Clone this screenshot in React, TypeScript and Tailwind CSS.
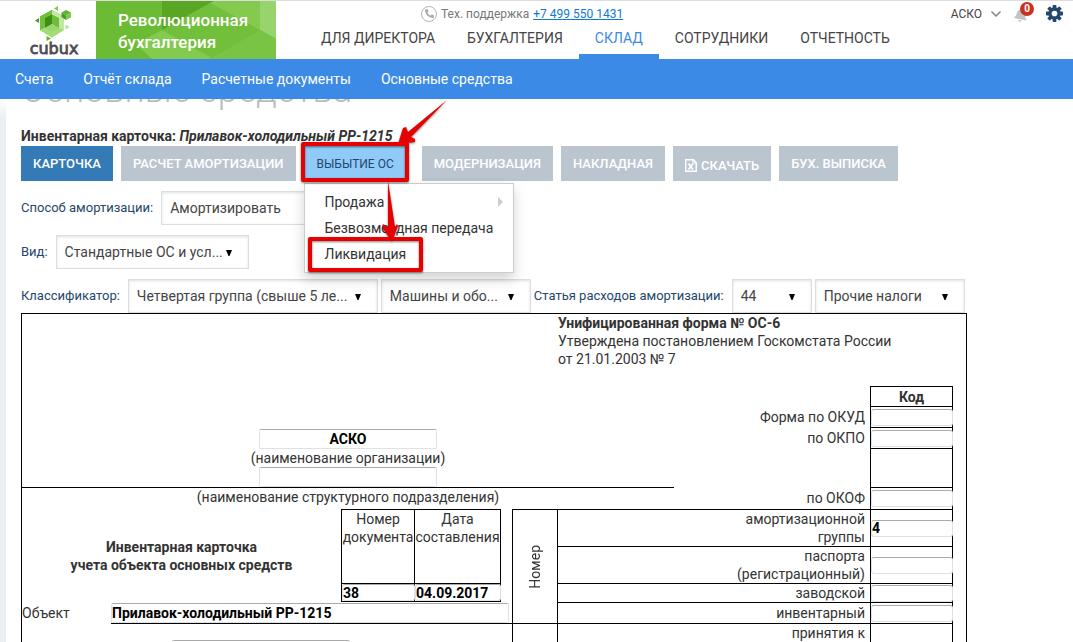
import React from "react";
import { ChevronDown } from "lucide-react";
import { FaBell, FaPhoneAlt } from "react-icons/fa";

function Logo() {
  return (
    <a href="#home" aria-label="cubux" className="flex w-24 shrink-0 flex-col items-center pl-3 pt-1">
      <svg width="40" height="36" viewBox="0 0 40 36" aria-hidden="true">
        <path d="M18 5 30 11.500 18 18 6 11.500Z" fill="#5cb531" />
        <path d="M18 5 6 11.500V25l12 7.500V18Z" fill="#6fbf3b" />
        <path d="M18 5 30 11.500V25L18 32.500V18Z" fill="#c3e8a5" />
        <path d="M6 25 18 32.500 30 25 18 19Z" fill="#a3dc78" />
        <path d="M11 13 18 9.500V19l-7 4Z" fill="#3f8f14" />
        <path d="M18 9.500 25 13v10l-7-4Z" fill="#6fbd3a" />
        <path d="M11 23 18 19l7 4-7 4Z" fill="#9bd76f" />
        <path d="M27.500 7.500 32 5l5 2.500-5 3Z" fill="#5cb531" />
        <path d="M32 10.500 37 7.500v5L32 15Z" fill="#7cc850" />
        <path d="M27.500 7.500 32 10.500V15L27.500 12Z" fill="#4a9c1e" />
        <path d="M20 3.500 24 1v5Z" fill="#7cc850" />
        <path d="M1 15.500 5 13v5Z" fill="#4a9c1e" />
        <path d="M31.500 19.500 36 22l-4.500 2.500Z" fill="#b9e59a" />
        <path d="M12.500 31 17 33.500 12.500 36Z" fill="#5cb531" />
      </svg>
      <span className="font-['DejaVu_Sans',sans-serif] text-base leading-4 text-[#4c4d51] [-webkit-text-stroke:0.8px_#4c4d51]">
        cubux
      </span>
    </a>
  );
}

function Banner() {
  return (
    <div className="relative w-[180px] shrink-0 overflow-hidden bg-[#6cbb34]">
      <svg className="absolute inset-0 size-full" viewBox="0 0 180 58" preserveAspectRatio="none" aria-hidden="true">
        <path d="M66 0h62L114 4 66 30Z" fill="#58a624" />
        <path d="M114 2 164 29 116 57 66 29Z" fill="#72bf3c" />
        <path d="M118 0h46v29L114 2Z" fill="#84ca4f" />
        <path d="M66 29 116 57l-2 1H56L40 43Z" fill="#84ca4f" />
        <path d="M164 0h16v38l-16-9Z" fill="#98d46e" />
        <path d="M164 29 180 38v20h-64v-1Z" fill="#7ac445" />
      </svg>
      <p className="relative pl-[22px] pt-2 text-[17px] leading-[22px] font-medium text-white">
        Революционная
        <br />
        бухгалтерия
      </p>
    </div>
  );
}

function Gear() {
  return (
    <svg width="17" height="17" viewBox="-9 -9 18 18" aria-hidden="true" fill="currentColor">
      {[0, 45, 90, 135].map((a) => (
        <rect key={a} x="-2" y="-9" width="4" height="18" rx="0.8" transform={`rotate(${a})`} />
      ))}
      <circle r="6.500" />
      <circle r="3" fill="#fff" />
    </svg>
  );
}

function SpreadsheetIcon() {
  return (
    <svg width="12" height="13" viewBox="0 0 12 13" aria-hidden="true" className="mr-1">
      <path d="M.75.75h7.500l3 3v8.500H.75Z" fill="none" stroke="#fff" strokeWidth="1.500" />
      <path d="M8 .5V4h3.500" fill="none" stroke="#fff" />
      <path d="M3.500 4.500 8 10.500M8 4.500 3.500 10.500" stroke="#fff" strokeWidth="1.800" />
    </svg>
  );
}

const sections = ["Для директора", "Бухгалтерия", "Склад", "Сотрудники", "Отчетность"];
const subsections = ["Счета", "Отчёт склада", "Расчетные документы", "Основные средства"];

function Header() {
  return (
    <header className="shrink-0">
      <div className="flex h-[59px] border-t border-[#ddd] bg-white">
        <Logo />
        <Banner />
        <div className="flex min-w-0 flex-1 flex-col justify-between">
          <div className="flex items-center pt-1 pr-2.5">
            <div className="flex flex-1 items-center pl-[145px] text-xs text-[#777]">
              <span className="mr-1 flex size-4 items-center justify-center rounded-full border border-[#b5b5b5] text-[#aaa]">
                <FaPhoneAlt size={9} />
              </span>
              Тех. поддержка
              <a href="tel:+74995501431" className="ml-1 text-[#0b7ad1] underline">
                +7 499 550 1431
              </a>
            </div>
            <button type="button" className="mr-2.5 flex items-center gap-1.5 text-xs text-[#444]">
              АСКО
              <ChevronDown size={16} strokeWidth={2.5} className="text-[#888]" />
            </button>
            <button type="button" aria-label="Уведомления" className="relative mr-3 flex h-4 w-5 items-end text-[#c4c4c4]">
              <FaBell size={14} className="rotate-12" />
              <span className="absolute -top-1 left-1.5 flex size-3.5 items-center justify-center rounded-full bg-[#c8321f] text-[10px] font-bold text-white">
                0
              </span>
            </button>
            <button type="button" aria-label="Настройки" className="text-[#24476b]">
              <Gear />
            </button>
          </div>
          <nav className="flex pl-[29px]">
            {sections.map((s) => (
              <a
                key={s}
                href="#section"
                className={
                  s === "Склад"
                    ? "border-b-5 border-[#3b8ae6] px-4 pb-1.5 text-sm text-[#3b8ae6] uppercase"
                    : "border-b-5 border-transparent px-4 pb-1.5 text-sm text-[#444] uppercase"
                }
              >
                {s}
              </a>
            ))}
          </nav>
        </div>
      </div>
      <nav className="flex h-10 items-center gap-[30px] bg-[#3b8ae6] pl-[15px] text-sm text-white">
        {subsections.map((s) => (
          <a key={s} href="#subsection">
            {s}
          </a>
        ))}
      </nav>
    </header>
  );
}

const RED = "#e60000";

function Pointers() {
  return (
    <svg
      className="pointer-events-none absolute -top-[47px] -left-[3px] z-20 drop-shadow-[0_1px_1px_rgba(0,0,0,0.5)]"
      width="150"
      height="180"
      viewBox="0 0 150 180"
      aria-hidden="true"
    >
      <rect x="2" y="45" width="104" height="36" fill="none" stroke={RED} strokeWidth="4" strokeLinejoin="round" />
      <rect x="9" y="140" width="111" height="31" fill="none" stroke={RED} strokeWidth="4" strokeLinejoin="round" />
      <path d="M146 1 107 33 105 28 102 29 97 45 114 43 114 40 110 38Z" fill={RED} />
      <path d="M87 82 87 129 82 125 81 128 91 143 97 127 96 125 94 128Z" fill={RED} />
    </svg>
  );
}

function DisposalMenu() {
  return (
    <div className="relative mr-2 pl-px">
      <button type="button" className="h-[35px] bg-[#90caf9] px-3 text-xs text-[#24476b]">
        ВЫБЫТИЕ ОС
      </button>
      <ul className="absolute top-[37px] left-0 z-10 w-[210px] border border-[#ccc] bg-white py-[5px] pl-5 text-sm leading-[26px] text-[#333] shadow-[0_6px_12px_rgba(0,0,0,0.18)]">
        <li className="flex items-center justify-between pr-2.5">
          <a href="#sale">Продажа</a>
          <span className="border-y-5 border-l-5 border-y-transparent border-l-[#ccc]" />
        </li>
        <li>
          <a href="#transfer">Безвозмездная передача</a>
        </li>
        <li>
          <a href="#liquidation">Ликвидация</a>
        </li>
      </ul>
      <Pointers />
    </div>
  );
}

function GrayButton({ children }: { children: React.ReactNode }) {
  return (
    <button type="button" className="flex h-[35px] items-center bg-[#bbc5d0] px-3 text-[13px] font-medium text-white">
      {children}
    </button>
  );
}

function Picker({ id, value, width, label }: { id: string; value: string; width: string; label?: string }) {
  return (
    <span className={"relative block h-[34px] " + width}>
      <select
        id={id}
        aria-label={label}
        className="size-full appearance-none border border-[#ddd] bg-white pr-6 pl-2 text-sm text-[#444] shadow-[inset_0_1px_3px_rgba(0,0,0,0.12)]"
      >
        <option>{value}</option>
      </select>
      <svg className="pointer-events-none absolute top-[15px] right-[17px]" width="6" height="6" viewBox="0 0 6 6" aria-hidden="true">
        <path d="M0 0h6L3.500 6h-1Z" fill="#000" />
      </svg>
    </span>
  );
}

function CodeInput({ label, value = "" }: { label: string; value?: string }) {
  return (
    <input
      aria-label={label}
      defaultValue={value}
      className="relative -mr-px block h-[17px] w-[calc(100%+1px)] rounded-[3px] border border-[#dde1e8] border-t-[#aaa] bg-white px-0 text-sm font-bold text-black"
    />
  );
}

const wideInput =
  "block h-5 rounded-[2px] border border-[#dde1e8] border-t-[#aaa] bg-white text-sm font-bold text-black";

function Sheet() {
  return (
    <table className="w-full max-w-[946px] table-fixed border-separate border-spacing-0 border-x border-t border-black text-sm leading-[18px] text-[#333] [&_td]:p-0">
      <colgroup>
        <col className="w-[89px]" />
        <col className="w-[230px]" />
        <col className="w-[73px]" />
        <col className="w-[87px]" />
        <col className="w-[11px]" />
        <col className="w-[45px]" />
        <col className="w-[117px]" />
        <col />
        <col className="w-[83px]" />
        <col className="w-[13px]" />
      </colgroup>
      <tbody>
        <tr className="h-[72px]">
          <td colSpan={6} />
          <td colSpan={4} className="pl-px! align-top">
            <b>Унифицированная форма № ОС-6</b>
            <br />
            Утверждена постановлением Госкомстата России
            <br />
            от 21.01.2003 № 7
          </td>
        </tr>
        <tr className="h-5">
          <td colSpan={7} rowSpan={4} className="align-bottom">
            <div className="flex flex-col items-center">
              <input aria-label="Организация" defaultValue="АСКО" className={wideInput + " w-[178px] text-center"} />
              <label htmlFor="unit">(наименование организации)</label>
              <input id="unit" className={wideInput + " w-[178px]"} />
            </div>
          </td>
          <td />
          <td className="border-x border-t border-black text-center font-bold">Код</td>
          <td />
        </tr>
        <tr className="h-[21px]">
          <td className="pr-[5px]! text-right">Форма по ОКУД</td>
          <td className="border-x border-t border-black">
            <CodeInput label="Форма по ОКУД" />
          </td>
          <td />
        </tr>
        <tr className="h-[21px]">
          <td className="pr-[5px]! text-right">по ОКПО</td>
          <td className="border-x border-t border-black">
            <CodeInput label="по ОКПО" />
          </td>
          <td />
        </tr>
        <tr className="h-[39px]">
          <td />
          <td className="border-x border-t border-black" />
          <td />
        </tr>
        <tr className="h-[22px]">
          <td colSpan={7} className="border-t border-black text-center align-top">
            (наименование структурного подразделения)
          </td>
          <td className="pr-[5px]! text-right">по ОКОФ</td>
          <td className="border-x border-t border-black">
            <CodeInput label="по ОКОФ" />
          </td>
          <td />
        </tr>
        <tr className="h-[37px]">
          <td colSpan={2} rowSpan={3} className="text-center font-bold">
            Инвентарная карточка
            <br />
            учета объекта основных средств
          </td>
          <td rowSpan={2} className="border-t border-l border-black text-center align-top">
            Номер документа
          </td>
          <td rowSpan={2} className="border-x border-t border-black text-center align-top">
            Дата составления
          </td>
          <td />
          <td rowSpan={4} className="border-t border-l border-black">
            <div className="flex justify-center">
              <span className="rotate-180 [writing-mode:vertical-rl]">Номер</span>
            </div>
          </td>
          <td colSpan={2} className="border-t border-l border-black pr-[5px]! text-right">
            амортизационной
            <br />
            группы
          </td>
          <td className="border-x border-t border-black">
            <CodeInput label="Номер амортизационной группы" value="4" />
          </td>
          <td />
        </tr>
        <tr className="h-[37px]">
          <td />
          <td colSpan={2} className="border-t border-l border-black pr-[5px]! text-right">
            паспорта
            <br />
            (регистрационный)
          </td>
          <td className="border-x border-t border-black">
            <CodeInput label="Номер паспорта" />
          </td>
          <td />
        </tr>
        <tr className="h-[19px]">
          <td className="border-y border-l border-black">
            <CodeInput label="Номер документа" value="38" />
          </td>
          <td className="border border-black">
            <CodeInput label="Дата составления" value="04.09.2017" />
          </td>
          <td />
          <td colSpan={2} className="border-t border-l border-black pr-[5px]! text-right">
            заводской
          </td>
          <td className="border-x border-t border-black">
            <CodeInput label="Заводской номер" />
          </td>
          <td />
        </tr>
        <tr className="h-[21px]">
          <td>
            <label htmlFor="object">Объект</label>
          </td>
          <td colSpan={4}>
            <input id="object" defaultValue="Прилавок-холодильный PP-1215" className={wideInput + " w-[398px]"} />
          </td>
          <td colSpan={2} className="border-t border-l border-black pr-[5px]! text-right">
            инвентарный
          </td>
          <td className="border-x border-t border-black">
            <CodeInput label="Инвентарный номер" />
          </td>
          <td />
        </tr>
        <tr className="h-[37px]">
          <td />
          <td colSpan={4} className="border-t border-black align-bottom">
            <input aria-label="Назначение объекта" className={wideInput + " ml-[61px] w-[178px]"} />
          </td>
          <td className="border-t border-l border-black" />
          <td colSpan={2} className="border-t border-l border-black pr-[5px]! text-right">
            принятия к
            <br />
            учету
          </td>
          <td className="border-x border-t border-black" />
          <td />
        </tr>
      </tbody>
    </table>
  );
}

export default function App() {
  return (
    <div className="flex h-screen flex-col overflow-hidden bg-white font-[Roboto,sans-serif]">
      <Header />
      <div className="flex min-h-0 flex-1">
        <div className="w-1.5 shrink-0 bg-linear-to-b from-white to-[#eaeff2] to-[20px]" />
        <main className="min-w-0 flex-1 overflow-hidden pl-[15px]">
          <div className="flex h-[11px] items-end overflow-hidden">
            <h1 className="text-4xl font-light text-[#bbb]">Основные средства</h1>
          </div>
          <p className="pt-4 text-sm font-bold text-[#333]">
            Инвентарная карточка: <i>Прилавок-холодильный PP-1215</i>
          </p>
          <div className="flex gap-2">
            <button type="button" className="h-[35px] bg-[#337ab7] px-3 text-[13px] font-medium text-white">
              КАРТОЧКА
            </button>
            <GrayButton>РАСЧЕТ АМОРТИЗАЦИИ</GrayButton>
            <DisposalMenu />
            <GrayButton>МОДЕРНИЗАЦИЯ</GrayButton>
            <GrayButton>НАКЛАДНАЯ</GrayButton>
            <GrayButton>
              <span className="flex items-center pt-1">
                <SpreadsheetIcon />
                СКАЧАТЬ
              </span>
            </GrayButton>
            <GrayButton>БУХ. ВЫПИСКА</GrayButton>
          </div>
          <form className="flex flex-col gap-2.5 pt-2.5 text-[13px] text-[#24476b]">
            <div className="flex items-center gap-2">
              <label htmlFor="method">Способ амортизации:</label>
              <Picker id="method" value="Амортизировать" width="w-[192px]" />
            </div>
            <div className="flex items-center gap-2">
              <label htmlFor="kind">Вид:</label>
              <Picker id="kind" value="Стандартные ОС и усл..." width="w-[193px]" />
            </div>
            <div className="flex items-center gap-[3px]">
              <label htmlFor="group" className="mr-[5px]">
                Классификатор:
              </label>
              <Picker id="group" value="Четвертая группа (свыше 5 ле..." width="w-[250px]" />
              <Picker id="subgroup" label="Подгруппа" value="Машины и обо..." width="w-[150px]" />
              <label htmlFor="expense" className="mr-[5px]">
                Статья расходов амортизации:
              </label>
              <Picker id="expense" value="44" width="w-[80px]" />
              <Picker id="tax" label="Вид расходов" value="Прочие налоги" width="w-[150px]" />
            </div>
          </form>
          <Sheet />
        </main>
      </div>
    </div>
  );
}
